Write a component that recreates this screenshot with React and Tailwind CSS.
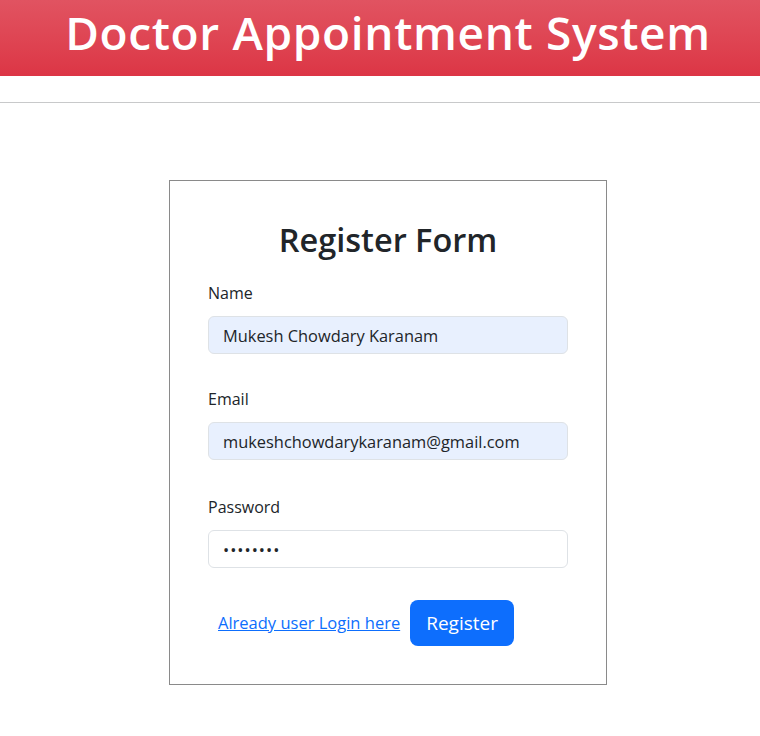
export default function App() {
  return (
    <div className="min-h-screen bg-white text-[#212529] font-['Open_Sans',_'Noto_Sans',_sans-serif]">
      <header className="h-[76px] pl-4 pt-[13px] bg-[#dc3545] bg-gradient-to-b from-[#e15361] to-[#dc3545] text-center">
        <h1 className="text-[46px] leading-[38px] font-semibold text-white tracking-[0.65px] whitespace-nowrap">
          Doctor Appointment System
        </h1>
      </header>
      <hr className="mt-[26px] border-0 border-t border-[#c8c9ca]" />

      <div className="flex justify-center pl-4 pt-[77px] pb-10">
        <form className="w-[438px] border border-[#8a8a8a] px-[38px] pt-[40px] pb-[38px]">
          <h2 className="text-center text-[32.5px] leading-[38px] font-semibold mb-[22px]">Register Form</h2>

          <Field label="Name" value="Mukesh Chowdary Karanam" filled gap="mb-[33px]" />
          <Field label="Email" value="mukeshchowdarykaranam@gmail.com" filled gap="mb-[35px]" />
          <Field label="Password" value="12345678" type="password" gap="mb-[32px]" />

          <div className="flex items-center">
            <a href="#" className="mx-[10px] text-[16.5px] leading-6 text-[#0d6efd] underline">
              Already user Login here
            </a>
            <button
              type="button"
              className="h-[46px] px-4 rounded-lg bg-[#0d6efd] text-white text-[19px] leading-[30px]"
            >
              Register
            </button>
          </div>
        </form>
      </div>
    </div>
  );
}

function Field({ label, value, type = 'text', filled, gap }) {
  return (
    <div className={gap}>
      <label className="block text-[16px] leading-6 mb-[11px]">{label}</label>
      <input
        type={type}
        readOnly
        value={value}
        className={`block w-full h-[38px] rounded-md border border-[#dee2e6] px-[14px] text-[16.4px] text-[#212529] outline-none ${
          filled ? 'bg-[#e8f0fe]' : 'bg-white tracking-[1px]'
        }`}
      />
    </div>
  );
}
